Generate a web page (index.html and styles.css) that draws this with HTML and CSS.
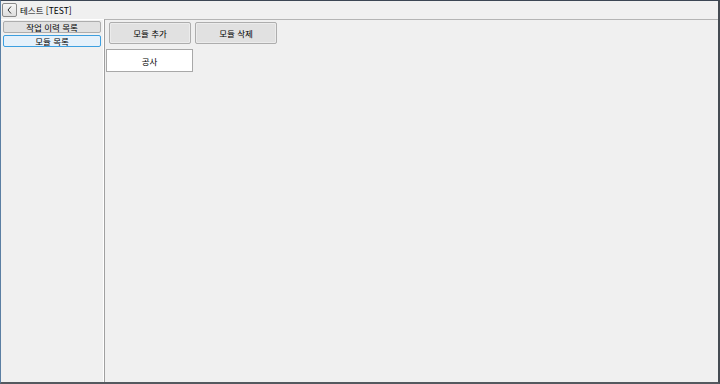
FILE: index.html
```html
<!DOCTYPE html>
<html lang="ko">
<head>
    <meta charset="UTF-8">
    <title>테스트 [TEST]</title>
    <link rel="stylesheet" href="styles.css">
</head>
<body>
    <div class="window">
        <div class="header">
            <button class="back-btn">
                <svg width="5" height="8" viewBox="0 0 5 8"><path d="M4 0.5 L1 4 L4 7.5" fill="none" stroke="#333" stroke-width="1"/></svg>
            </button>
            <span class="title">테스트 [TEST]</span>
        </div>
        <div class="body">
            <div class="sidebar">
                <button class="side-btn">작업 이력 목록</button>
                <button class="side-btn selected">모듈 목록</button>
            </div>
            <div class="main">
                <div class="toolbar">
                    <button class="tool-btn">모듈 추가</button>
                    <button class="tool-btn">모듈 삭제</button>
                </div>
                <div class="module-list">
                    <div class="module-item">공사</div>
                </div>
            </div>
        </div>
    </div>
</body>
</html>
```
FILE: styles.css
```css
body {
    margin: 0;
    background-color: #f0f0f0;
    font-family: "Noto Sans CJK KR", "DejaVu Sans", sans-serif;
    font-size: 8.5px;
    color: #000;
}

.window {
    width: 720px;
    height: 384px;
    box-sizing: border-box;
    display: flex;
    flex-direction: column;
    background-color: #f0f0f0;
    border-top: 1px solid #3c4654;
    border-left: 1px solid #5b7fa3;
    border-right: 2px solid #454b52;
    border-bottom: 2px solid #54595f;
}

.header {
    height: 18px;
    display: flex;
    align-items: center;
    padding-left: 1px;
    box-sizing: border-box;
}

.back-btn {
    width: 15px;
    height: 14px;
    margin: 0;
    padding: 0;
    border: 1px solid #8a8a8a;
    border-radius: 2px;
    background: linear-gradient(#f6f6f6, #dedede);
    display: flex;
    align-items: center;
    justify-content: center;
}

.title {
    margin-left: 3px;
    line-height: 14px;
}

.body {
    flex: 1;
    display: flex;
    border-top: 1px solid #ffffff;
}

.sidebar {
    width: 98px;
    display: flex;
    flex-direction: column;
    gap: 2px;
    padding: 1px 2px 0 2px;
    border-right: 1px solid #ffffff;
}

.side-btn {
    height: 12px;
    margin: 0;
    padding: 0;
    border: 1px solid #adadad;
    border-radius: 2px;
    background-color: #e1e1e1;
    font-family: "Noto Sans CJK KR", sans-serif;
    font-size: 8.5px;
    line-height: 10px;
    color: #000;
}

.side-btn.selected {
    border-color: #3c9fe0;
    background-color: #e5f1fb;
}

.main {
    flex: 1;
    display: flex;
    flex-direction: column;
    border-left: 1px solid #a0a0a0;
    border-top: 1px solid #b4b4b4;
    margin-top: -1px;
}

.toolbar {
    display: flex;
    gap: 4px;
    padding: 2px 0 0 4px;
}

.tool-btn {
    width: 82px;
    height: 22px;
    margin: 0;
    padding: 0;
    border: 1px solid #adadad;
    border-radius: 2px;
    background-color: #e1e1e1;
    box-shadow: inset 0 0 0 1px #ececec;
    font-family: "Noto Sans CJK KR", sans-serif;
    font-size: 8.5px;
    color: #000;
}

.module-list {
    padding: 5px 0 0 1px;
}

.module-item {
    width: 87px;
    height: 23px;
    box-sizing: border-box;
    border: 1px solid #a8a8a8;
    background-color: #ffffff;
    display: flex;
    align-items: center;
    justify-content: center;
}
```
